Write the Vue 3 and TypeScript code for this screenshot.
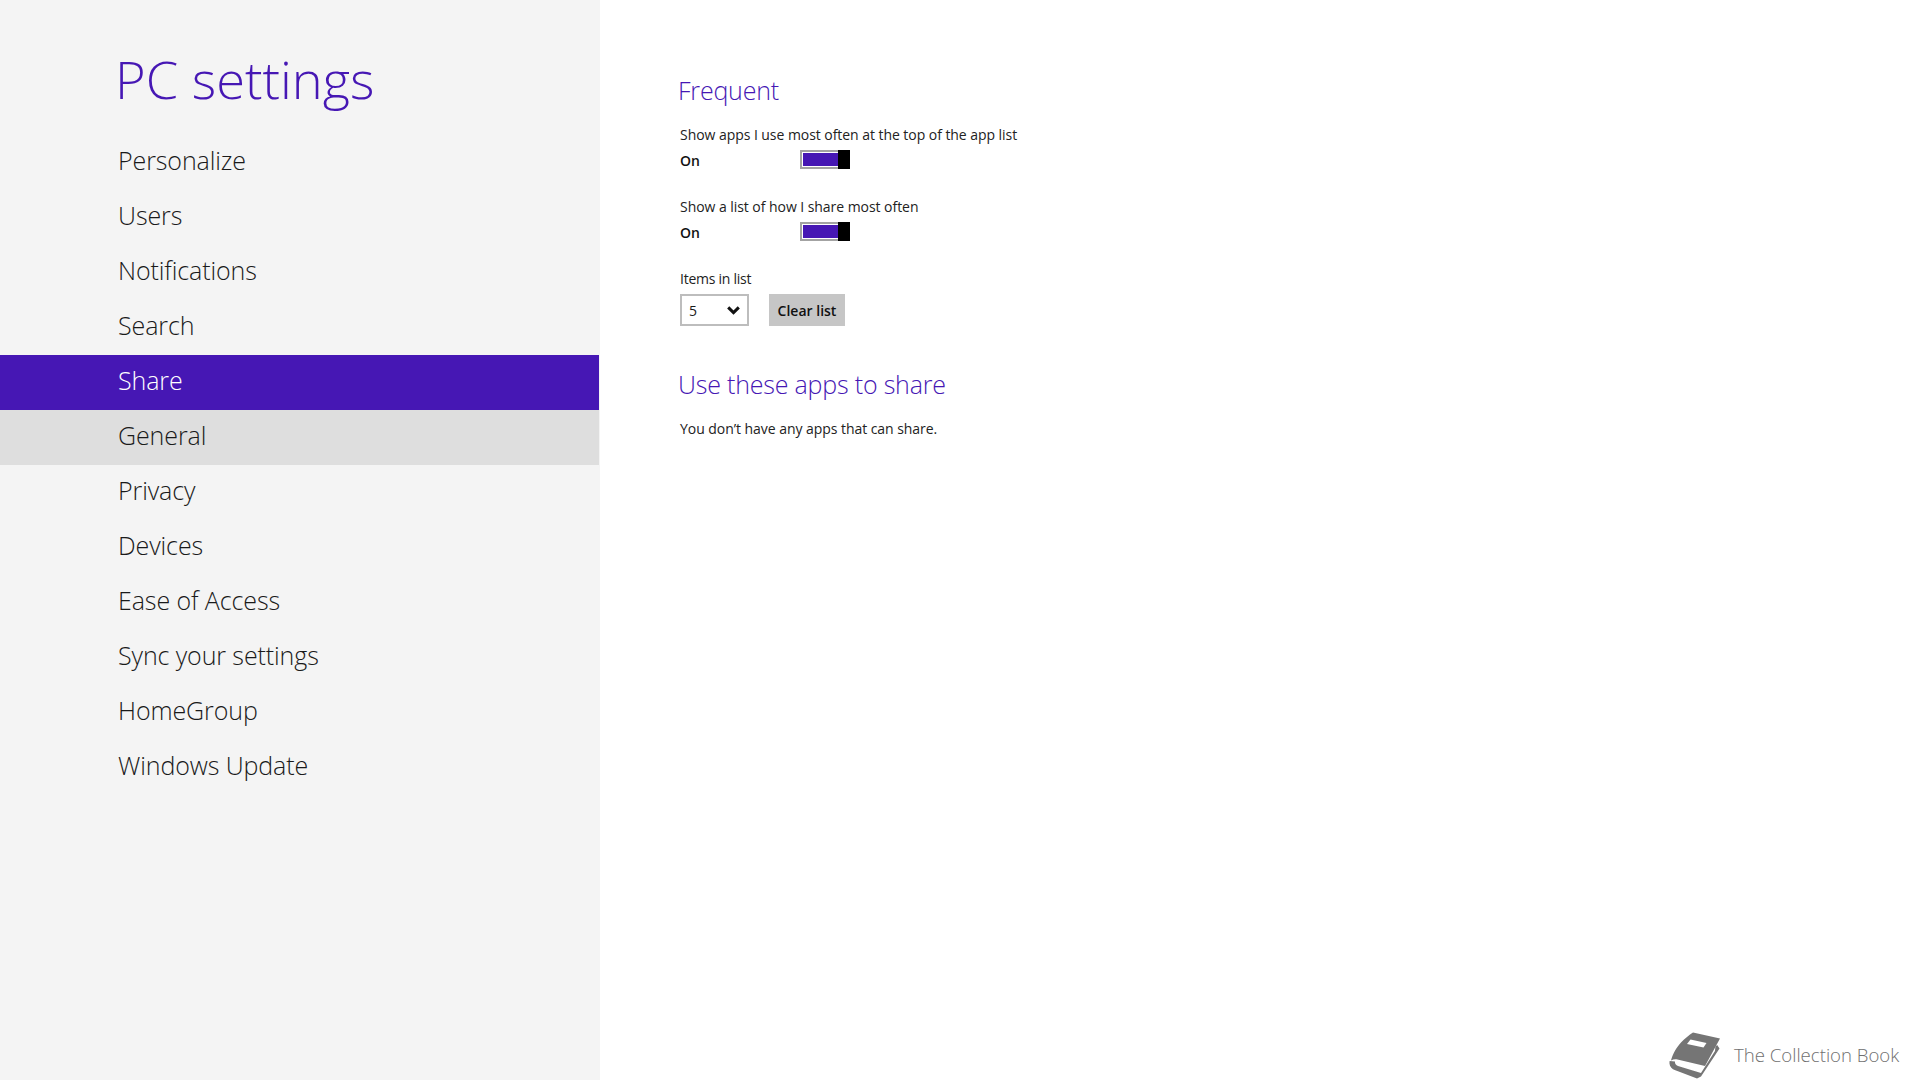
<template>
  <div class="page">
    <aside class="sidebar">
      <h1 class="title">PC settings</h1>
      <nav class="nav">
        <div
          v-for="item in navItems"
          :key="item"
          class="nav-item"
          :class="{ active: item === 'Share', hover: item === 'General' }"
        >
          {{ item }}
        </div>
      </nav>
    </aside>
    <main class="content">
      <h2 class="heading">Frequent</h2>
      <div v-for="opt in options" :key="opt" class="option">
        <div class="label">{{ opt }}</div>
        <div class="toggle-row">
          <span class="state">On</span>
          <span class="toggle"><span class="fill"></span><span class="thumb"></span></span>
        </div>
      </div>
      <div class="label items-label">Items in list</div>
      <div class="controls">
        <div class="select">
          <span>5</span>
          <svg width="13" height="9" viewBox="0 0 13 9">
            <path d="M1.2 1.4 6.5 6.6 11.8 1.4" fill="none" stroke="#111" stroke-width="3" />
          </svg>
        </div>
        <button class="clear">Clear list</button>
      </div>
      <h2 class="heading second">Use these apps to share</h2>
      <p class="label empty">You don’t have any apps that can share.</p>
    </main>
    <div class="brand">
      <svg class="book" width="52" height="48" viewBox="0 0 52 48">
        <path d="M25 1.5 52 7.5 37 35 9.5 28.5C7 28 5 28.4 3 29.6 4.6 22.5 9 16 13 11.5 17 7.5 21 4 25 1.5Z" fill="#757575" />
        <path d="M22.5 8.5 38.5 12 35.5 16.5 19 13Z" fill="#fff" />
        <path d="M1.6 30C1 33 2 36.4 5 38.2 6.5 39 8 39.6 10 40.2L29 47.6 33 45.6 51.5 17.5 49.2 14 47.4 15.4 47 20 33 42 10 35C8 34.2 6.6 32.4 7 30.4Z" fill="#757575" />
      </svg>
      <span class="brand-name">The Collection Book</span>
    </div>
  </div>
</template>

<script setup lang="ts">
const navItems: string[] = [
  'Personalize',
  'Users',
  'Notifications',
  'Search',
  'Share',
  'General',
  'Privacy',
  'Devices',
  'Ease of Access',
  'Sync your settings',
  'HomeGroup',
  'Windows Update'
]

const options: string[] = [
  'Show apps I use most often at the top of the app list',
  'Show a list of how I share most often'
]
</script>

<style>
html,
body {
  margin: 0;
  background: #fff;
}
</style>

<style scoped>
.page {
  position: relative;
  display: flex;
  width: 1920px;
  height: 1080px;
  overflow: hidden;
  background: #fff;
  font-family: "Open Sans", "Noto Sans", sans-serif;
  color: #1a1a1a;
}

.sidebar {
  width: 600px;
  flex: none;
  background: #f4f4f4;
  padding-top: 41px;
  box-sizing: border-box;
}

.title {
  margin: 0 0 0 115px;
  height: 94px;
  font-size: 52.4px;
  line-height: 76px;
  font-weight: 300;
  color: #4617b4;
}

.nav-item {
  height: 55px;
  line-height: 51px;
  margin-right: 1px;
  padding-left: 118px;
  font-size: 25px;
  font-weight: 300;
  letter-spacing: -0.1px;
  color: #1a1a1a;
}

.nav-item.active {
  background: #4617b4;
  color: #fff;
}

.nav-item.hover {
  background: #dedede;
}

.content {
  padding: 72px 0 0 680px;
  margin-left: -600px;
}

.heading {
  margin: 0 0 0 -2px;
  font-size: 25px;
  line-height: 36px;
  font-weight: 300;
  letter-spacing: -0.2px;
  color: #4617b4;
}

.option {
  margin-top: 17px;
  height: 55px;
}

.option + .option {
  margin-top: 17px;
}

.label {
  font-size: 14px;
  line-height: 20px;
  letter-spacing: -0.05px;
  color: #222;
}

.toggle-row {
  display: flex;
  align-items: center;
  height: 22px;
  margin-top: 4px;
}

.state {
  width: 120px;
  font-size: 14px;
  font-weight: 600;
  color: #111;
}

.toggle {
  position: relative;
  display: block;
  width: 50px;
  height: 19px;
  margin-top: -1px;
  box-sizing: border-box;
  border: 2px solid #a3a3a3;
  background: #fff;
}

.fill {
  position: absolute;
  left: 1px;
  top: 1px;
  bottom: 1px;
  right: 10px;
  background: #4617b4;
}

.thumb {
  position: absolute;
  right: -2px;
  top: -2px;
  width: 12px;
  height: 19px;
  background: #000;
}

.items-label {
  margin-top: 17px;
  letter-spacing: -0.25px;
}

.controls {
  display: flex;
  gap: 20px;
  margin-top: 5px;
}

.select {
  display: flex;
  align-items: center;
  justify-content: space-between;
  box-sizing: border-box;
  width: 69px;
  height: 32px;
  padding: 1px 7px 0 7px;
  border: 2px solid #bdbdbd;
  font-size: 14px;
}

.clear {
  width: 76px;
  height: 32px;
  padding: 0;
  border: 0;
  background: #c6c6c6;
  font-family: inherit;
  font-size: 14px;
  font-weight: 600;
  color: #111;
}

.second {
  margin-top: 40px;
}

.empty {
  margin: 17px 0 0;
}

.brand {
  position: absolute;
  left: 1668px;
  top: 1031px;
  display: flex;
  align-items: center;
  gap: 14px;
}

.brand-name {
  position: relative;
  top: -1px;
  font-size: 18.6px;
  font-weight: 300;
  color: #6f6f6f;
  white-space: nowrap;
}
</style>
